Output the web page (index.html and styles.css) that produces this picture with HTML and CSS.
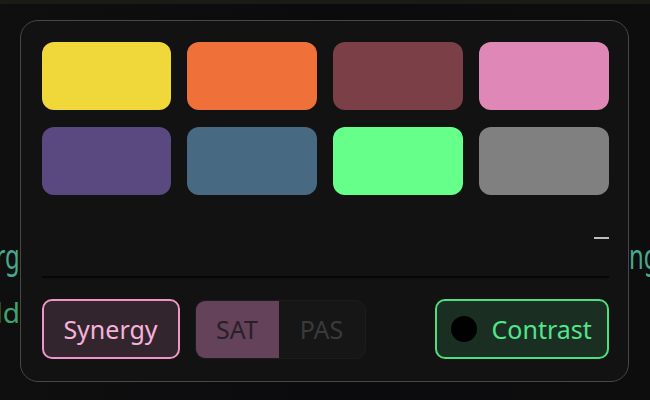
FILE: index.html
```html
<!DOCTYPE html>
<html>
<head>
<meta charset="utf-8">
<link rel="stylesheet" href="styles.css">
</head>
<body>
<div class="page">
  <div class="topbar"></div>
  <div class="bg">
    <div class="bg-row row1">
      <div class="bg-left"><span class="teal narrow-l">Iceberg</span></div>
      <div class="bg-right"><span class="teal narrow-r">ng</span></div>
    </div>
    <div class="bg-row row2">
      <div class="bg-left"><span class="green">Build</span></div>
    </div>
  </div>

  <div class="panel">
    <div class="swatches">
      <div class="swatch" style="background:#f0d83a"></div>
      <div class="swatch" style="background:#ef7139"></div>
      <div class="swatch" style="background:#7b3f48"></div>
      <div class="swatch" style="background:#df88b8"></div>
      <div class="swatch" style="background:#5a4880"></div>
      <div class="swatch" style="background:#476a82"></div>
      <div class="swatch" style="background:#66ff8a"></div>
      <div class="swatch" style="background:#808080"></div>
    </div>
    <div class="status">
      <span class="dash"></span>
    </div>
    <div class="sep"></div>
    <div class="controls">
      <button class="btn synergy">Synergy</button>
      <div class="toggle">
        <span class="opt active">SAT</span>
        <span class="opt">PAS</span>
      </div>
      <div class="spacer"></div>
      <button class="btn contrast"><span class="dot"></span>Contrast</button>
    </div>
  </div>
</div>
</body>
</html>
```

FILE: styles.css
```css
html, body {
  margin: 0;
  padding: 0;
  width: 650px;
  height: 400px;
  overflow: hidden;
  background: #0b0b0d;
  font-family: "Noto Sans", "Open Sans", sans-serif;
}

.page {
  position: relative;
  width: 650px;
  height: 400px;
  background: linear-gradient(90deg, #0f0f10 0%, #0b0b0d 50%, #0d0d0e 100%);
}

.topbar {
  height: 4px;
  background: #1b1a15;
}

.bg {
  padding-top: 232px;
}

.bg-row {
  display: flex;
  justify-content: space-between;
  white-space: nowrap;
}

.bg-left {
  width: 20px;
  display: flex;
  justify-content: flex-end;
}

.bg-right {
  width: 21px;
  display: flex;
  justify-content: flex-start;
}

.row1 {
  font-size: 34px;
  line-height: 40px;
  height: 40px;
}

.row2 {
  font-size: 28px;
  line-height: 36px;
  margin-top: 18px;
}

.narrow-l {
  display: inline-block;
  transform: scaleX(0.7);
  transform-origin: right center;
}

.narrow-r {
  display: inline-block;
  transform: scaleX(0.7);
  transform-origin: left center;
}

.teal { color: #48a98b; }
.green { color: #3fa26a; }

.panel {
  position: absolute;
  left: 20px;
  top: 20px;
  width: 567px;
  height: 319px;
  padding: 21px 19px 20px 20.5px;
  border: 1.5px solid #474747;
  border-radius: 18px;
  background: #121212;
  display: flex;
  flex-direction: column;
}

.swatches {
  display: grid;
  grid-template-columns: repeat(4, 1fr);
  column-gap: 16px;
  row-gap: 17px;
}

.swatch {
  height: 68px;
  border-radius: 12px;
}

.status {
  height: 81px;
  display: flex;
  justify-content: flex-end;
  align-items: center;
  padding-top: 4px;
  box-sizing: border-box;
}

.dash {
  width: 15px;
  height: 2px;
  background: #bdbdbd;
}

.sep {
  height: 2px;
  background: #060606;
}

.controls {
  margin-top: 21px;
  display: flex;
  align-items: center;
  gap: 15px;
  height: 60px;
}

.spacer { flex: 1; }

.btn {
  height: 60px;
  box-sizing: border-box;
  border-radius: 10px;
  font-family: "Noto Sans", "Open Sans", sans-serif;
  font-size: 25px;
  padding: 0 20px;
  display: flex;
  align-items: center;
}

.synergy {
  width: 138px;
  justify-content: center;
  background: #33252e;
  border: 2px solid #f095c6;
  color: #f6b2d8;
}

.toggle {
  width: 171px;
  height: 59px;
  box-sizing: border-box;
  border: 1px solid #1c1c1c;
  border-radius: 10px;
  background: #161616;
  display: flex;
  overflow: hidden;
}

.opt {
  flex: 1;
  display: flex;
  align-items: center;
  justify-content: center;
  font-size: 25px;
  color: #3a3a3a;
}

.opt.active {
  flex: 0 0 83px;
  background: #64425a;
  color: #2a1f27;
}

.contrast {
  width: 174px;
  padding: 0 14px;
  gap: 15px;
  background: #1b2e22;
  border: 2px solid #4ede82;
  color: #52e58b;
}

.dot {
  width: 26px;
  height: 26px;
  border-radius: 50%;
  background: #000;
  flex: 0 0 26px;
}
```
